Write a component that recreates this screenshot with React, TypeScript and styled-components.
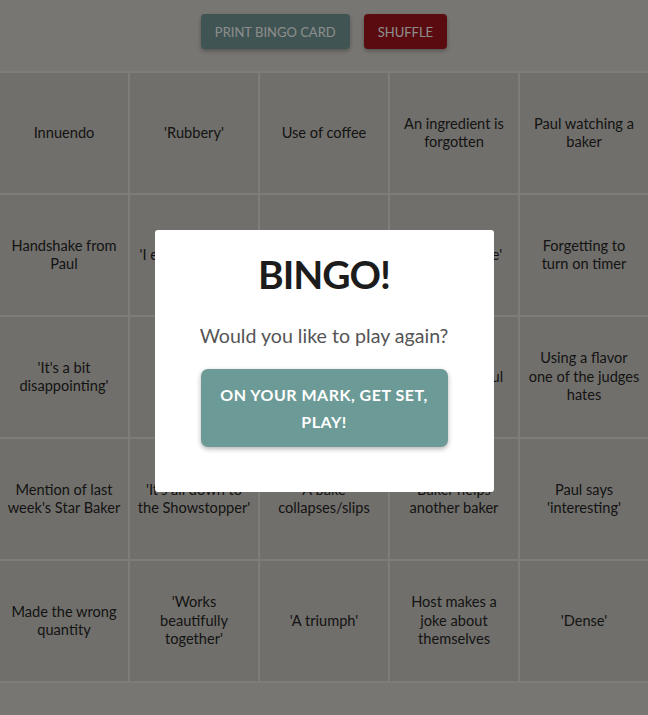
import React from "react";
import styled, { createGlobalStyle } from "styled-components";

const GlobalStyle = createGlobalStyle`
  html, body {
    margin: 0;
    padding: 0;
    background: #dad8d1;
    font-family: Lato, "Liberation Sans", sans-serif;
  }
`;

const Page = styled.div`
  width: 648px;
  min-height: 715px;
  background: #dad8d1;
`;

const Toolbar = styled.div`
  display: flex;
  justify-content: center;
  gap: 14px;
  padding: 14px 0 22px;
`;

const ToolButton = styled.button<{ $variant: "teal" | "red" }>`
  height: 35px;
  padding: 0 14px;
  border: none;
  border-radius: 4px;
  font-family: Lato, "Liberation Sans", sans-serif;
  font-size: 13px;
  color: #ffffff;
  text-transform: uppercase;
  background: ${(p) => (p.$variant === "teal" ? "#739a97" : "#a4141d")};
  box-shadow: 0 2px 4px rgba(0, 0, 0, 0.3);
`;

const Board = styled.div`
  display: grid;
  grid-template-columns: repeat(5, 1fr);
  grid-auto-rows: 120px;
  gap: 2px;
  padding: 2px 0;
  background: #e5e3de;
`;

const Cell = styled.div`
  display: flex;
  align-items: center;
  justify-content: center;
  padding: 0 7.5px;
  background: #cdcbc4;
  color: #262626;
  font-size: 14.6px;
  line-height: 18.5px;
  text-align: center;
`;

const Overlay = styled.div`
  position: fixed;
  inset: 0;
  background: rgba(0, 0, 0, 0.45);
  display: flex;
  align-items: center;
  justify-content: center;
`;

const Modal = styled.div`
  width: 339px;
  box-sizing: border-box;
  margin-top: 7px;
  padding: 20px 46px 45px;
  background: #ffffff;
  border-radius: 3px;
  display: flex;
  flex-direction: column;
  align-items: center;
`;

const Title = styled.h1`
  margin: 0;
  font-size: 39px;
  line-height: 48px;
  font-weight: 700;
  letter-spacing: -1px;
  color: #1c1c1c;
`;

const Prompt = styled.p`
  margin: 26px 0 21px;
  font-size: 19.6px;
  line-height: 24px;
  color: #555555;
  white-space: nowrap;
`;

const PlayButton = styled.button`
  width: 247px;
  padding: 12px 8px;
  border: none;
  border-radius: 7px;
  background: #6c9a96;
  color: #ffffff;
  font-family: Lato, "Liberation Sans", sans-serif;
  font-size: 16px;
  font-weight: 700;
  line-height: 27px;
  letter-spacing: 0.5px;
  text-transform: uppercase;
  box-shadow: 0 2px 5px rgba(0, 0, 0, 0.3);
`;

const squares = [
  "Innuendo",
  "'Rubbery'",
  "Use of coffee",
  "An ingredient is forgotten",
  "Paul watching a baker",
  "Handshake from Paul",
  "'I expected more'",
  "Soggy bottom",
  "'Lovely texture'",
  "Forgetting to turn on timer",
  "'It's a bit disappointing'",
  "'Stodgy'",
  "Mary says 'scrummy'",
  "Really colourful",
  "Using a flavor one of the judges hates",
  "Mention of last week's Star Baker",
  "'It's all down to the Showstopper'",
  "A bake collapses/slips",
  "Baker helps another baker",
  "Paul says 'interesting'",
  "Made the wrong quantity",
  "'Works beautifully together'",
  "'A triumph'",
  "Host makes a joke about themselves",
  "'Dense'",
];

export default function App() {
  return (
    <>
      <GlobalStyle />
      <Page>
        <Toolbar>
          <ToolButton $variant="teal">Print Bingo Card</ToolButton>
          <ToolButton $variant="red">Shuffle</ToolButton>
        </Toolbar>
        <Board>
          {squares.map((s, i) => (
            <Cell key={i}>{s}</Cell>
          ))}
        </Board>
      </Page>
      <Overlay>
        <Modal>
          <Title>BINGO!</Title>
          <Prompt>Would you like to play again?</Prompt>
          <PlayButton>On your mark, get set, play!</PlayButton>
        </Modal>
      </Overlay>
    </>
  );
}
